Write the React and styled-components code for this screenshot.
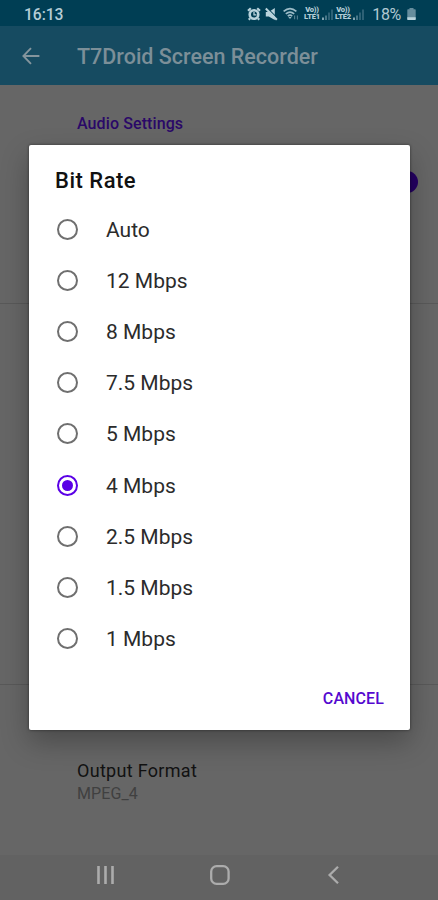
import React, { useState } from 'react'
import styled, { createGlobalStyle } from 'styled-components'

const bitRates = [
  'Auto',
  '12 Mbps',
  '8 Mbps',
  '7.5 Mbps',
  '5 Mbps',
  '4 Mbps',
  '2.5 Mbps',
  '1.5 Mbps',
  '1 Mbps',
]

const AlarmIcon = () => (
  <svg width="14" height="14" viewBox="0 0 14 14" fill="none" stroke="#b9d3dc">
    <circle cx="7" cy="7.5" r="4.3" strokeWidth="2.6" />
    <path d="M1 3.8L3.8 1.2M13 3.8L10.2 1.2M3 11.4L1.8 12.8M11 11.4L12.2 12.8" strokeWidth="2.2" />
    <path d="M7 5v2.8h2.4" strokeWidth="1.3" />
  </svg>
)

const MuteIcon = () => (
  <svg width="13" height="14" viewBox="0 0 13 14">
    <path d="M.8 5h3L9.8 1v12L3.8 9.6h-3z" fill="#b9d3dc" />
    <path d="M2.6 1.4L12.8 11.6" stroke="#003e54" strokeWidth="1.1" />
    <path d="M.8 1.6L11.8 12.8" stroke="#b9d3dc" strokeWidth="2.1" />
  </svg>
)

const WifiIcon = () => (
  <svg width="17" height="14" viewBox="0 0 17 14" fill="none" stroke="#9dbdc8">
    <path d="M.6 4.4Q7-1.2 13.4 4.4M2.8 6.9Q7 3.3 11.2 6.9M4.8 9.2Q7 7.2 9.2 9.2" strokeWidth="1.6" />
    <path d="M5.4 10h3.2L7 12z" fill="#9dbdc8" stroke="none" />
    <path d="M11.6 8.4v3.8M14.4 12.4V8.6" stroke="#527f90" strokeWidth="1.1" />
  </svg>
)

const SignalIcon = () => (
  <svg width="13" height="13" viewBox="0 0 13 13" fill="none">
    <path d="M2 9.5V12" stroke="#a4c0cb" strokeWidth="1.6" />
    <path d="M5 7.5V12" stroke="#6f97a6" strokeWidth="1.3" />
    <path d="M8 4.5V12M11 1.5V12" stroke="#467588" strokeWidth="1.3" />
  </svg>
)

const BatteryIcon = () => (
  <svg width="9" height="14" viewBox="0 0 9 14">
    <path d="M2.5 1h4v1.2H8a.7.7 0 01.7.7v9.4a.7.7 0 01-.7.7H1a.7.7 0 01-.7-.7V2.9A.7.7 0 011 2.2h1.5z" fill="#668d9d" />
    <path d="M.3 10.2h8.4v2.1a.7.7 0 01-.7.7H1a.7.7 0 01-.7-.7z" fill="#b9d3dc" />
  </svg>
)

const BackArrow = () => (
  <svg width="18" height="18" viewBox="0 0 18 18" fill="none" stroke="#84959d" strokeWidth="1.9">
    <path d="M17.4 9H1.6M9 1.2L1.4 9 9 16.8" />
  </svg>
)

const App = () => {
  const [selected, setSelected] = useState('4 Mbps')

  return (
    <Screen>
      <GlobalStyle />

      <StatusBar>
        <Clock>16:13</Clock>
        <StatusIcons>
          <AlarmIcon />
          <MuteIcon />
          <WifiIcon />
          <Carrier><span>Vo))</span><span>LTE1</span></Carrier>
          <SignalIcon />
          <Carrier><span>Vo))</span><span>LTE2</span></Carrier>
          <SignalIcon />
          <Percent>18%</Percent>
          <BatteryIcon />
        </StatusIcons>
      </StatusBar>

      <Toolbar>
        <BackArrow />
        <ToolbarTitle>T7Droid Screen Recorder</ToolbarTitle>
      </Toolbar>

      <Settings>
        <Section $height={219}>
          <SectionTitle>Audio Settings</SectionTitle>
          <SwitchThumb />
        </Section>
        <Section $height={381} />
        <Preference>
          <PreferenceTitle>Output Format</PreferenceTitle>
          <PreferenceValue>MPEG_4</PreferenceValue>
        </Preference>
      </Settings>

      <NavBar>
        <svg width="20" height="20" viewBox="0 0 20 20" stroke="#acacac" strokeWidth="2.6">
          <path d="M2.5 1v18M9.5 1v18M16.5 1v18" />
        </svg>
        <svg width="20" height="20" viewBox="0 0 20 20" fill="none" stroke="#acacac" strokeWidth="2.3">
          <rect x="1.2" y="1.2" width="17.4" height="17.6" rx="5.4" />
        </svg>
        <svg width="20" height="20" viewBox="0 0 20 20" fill="none" stroke="#acacac" strokeWidth="2.3">
          <path d="M14 1.8L5.6 10l8.4 8.2" />
        </svg>
      </NavBar>

      <Dialog role="dialog">
        <DialogTitle>Bit Rate</DialogTitle>
        <Options>
          {bitRates.map((rate) => (
            <Option key={rate} onClick={() => setSelected(rate)}>
              <Radio $checked={rate === selected} />
              <OptionLabel>{rate}</OptionLabel>
            </Option>
          ))}
        </Options>
        <DialogActions>
          <CancelButton>CANCEL</CancelButton>
        </DialogActions>
      </Dialog>
    </Screen>
  )
}

const GlobalStyle = createGlobalStyle`
  * {
    box-sizing: border-box;
  }

  body {
    margin: 0;
    font-family: Roboto, sans-serif;
  }
`;

const Screen = styled.div`
  position: relative;
  width: 438px;
  height: 900px;
  display: flex;
  flex-direction: column;
  background-color: #666;
  overflow: hidden;
`;

const StatusBar = styled.div`
  height: 26px;
  padding: 2px 22px 0 24px;
  display: flex;
  justify-content: space-between;
  align-items: center;
  background-color: #003e54;
`;

const Clock = styled.span`
  font-size: 15.7px;
  font-weight: 500;
  letter-spacing: -0.1px;
  color: #b5cdd6;
`;

const StatusIcons = styled.div`
  display: flex;
  align-items: center;

  svg {
    flex: none;
  }

  svg:nth-child(2) {
    margin-left: 4px;
  }

  svg:nth-child(3) {
    margin: 0 3px 0 5px;
  }
`;

const Carrier = styled.div`
  width: 18px;
  display: flex;
  flex-direction: column;
  align-items: center;
  font-size: 7px;
  line-height: 8px;
  font-weight: 900;
  letter-spacing: -0.2px;
  color: #b4cdd7;
  transform: scale(1.08, 0.9);
`;

const Percent = styled.span`
  margin: 0 6px 0 7px;
  font-size: 16px;
  letter-spacing: -0.3px;
  color: #b0c8d2;
`;

const Toolbar = styled.header`
  height: 59px;
  padding: 0 22px;
  display: flex;
  align-items: center;
  gap: 37px;
  background-color: #164b61;
`;

const ToolbarTitle = styled.h1`
  margin: 2px 0 0;
  font-size: 21.5px;
  font-weight: 500;
  color: #7c8f98;
  white-space: nowrap;
`;

const Settings = styled.main`
  flex: 1;
`;

const Section = styled.section`
  height: ${({ $height }) => $height}px;
  padding: 29px 20px 0 77px;
  border-bottom: 1px solid #595959;
`;

const SectionTitle = styled.h2`
  margin: 0;
  font-size: 16px;
  line-height: 20px;
  font-weight: 500;
  letter-spacing: 0.1px;
  color: #2a0868;
`;

const SwitchThumb = styled.div`
  width: 22px;
  height: 22px;
  margin: 37px 0 0 auto;
  border-radius: 50%;
  background-color: #250063;
`;

const Preference = styled.div`
  padding: 75px 20px 0 77px;
`;

const PreferenceTitle = styled.div`
  font-size: 18px;
  line-height: 22px;
  letter-spacing: 0.3px;
  color: #121212;
`;

const PreferenceValue = styled.div`
  margin-top: 2px;
  font-size: 16px;
  line-height: 20px;
  letter-spacing: 0.1px;
  color: #404040;
`;

const NavBar = styled.nav`
  height: 45px;
  padding: 0 94px 5px 96px;
  display: flex;
  justify-content: space-between;
  align-items: center;
  background-color: #626262;
`;

const Dialog = styled.div`
  position: absolute;
  top: 145px;
  left: 29px;
  width: 381px;
  height: 585px;
  display: flex;
  flex-direction: column;
  border-radius: 2px;
  background-color: #fff;
  box-shadow: 0 12px 28px rgba(0, 0, 0, 0.28), 0 0 3px rgba(0, 0, 0, 0.5);
`;

const DialogTitle = styled.h2`
  margin: 0;
  padding: 22px 26px 0;
  font-size: 22px;
  line-height: 28px;
  font-weight: 500;
  letter-spacing: 0.5px;
  color: #111;
`;

const Options = styled.div`
  margin-top: 9px;
`;

const Option = styled.div`
  height: 51.1px;
  padding-left: 28px;
  display: flex;
  align-items: center;
  gap: 28px;
  cursor: pointer;
`;

const OptionLabel = styled.span`
  padding-top: 1px;
  font-size: 21px;
  line-height: 24px;
  color: #2b2b2b;
`;

const Radio = styled.span`
  width: 21px;
  height: 21px;
  display: grid;
  place-items: center;
  border: 2px solid ${({ $checked }) => ($checked ? '#5a00e6' : '#6f6f6f')};
  border-radius: 50%;

  &::after {
    content: '';
    width: 11px;
    height: 11px;
    border-radius: 50%;
    background-color: ${({ $checked }) => ($checked ? '#5a00e6' : 'transparent')};
  }
`;

const DialogActions = styled.div`
  margin-top: auto;
  padding: 0 26px 21px;
  display: flex;
  justify-content: flex-end;
`;

const CancelButton = styled.button`
  padding: 0;
  border: none;
  background: none;
  font-family: inherit;
  font-size: 16px;
  line-height: 20px;
  font-weight: 500;
  letter-spacing: 0.1px;
  color: #5509cf;
  cursor: pointer;
`;

export default App
